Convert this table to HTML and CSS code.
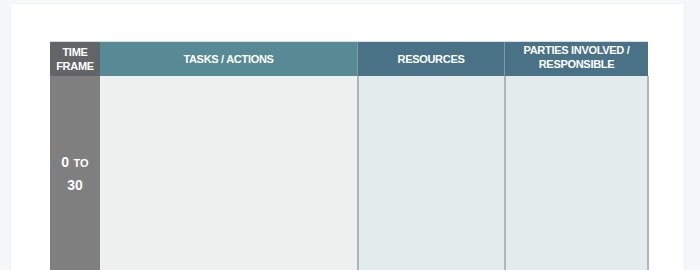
FILE: index.html
```html
<!DOCTYPE html>
<html>
<head>
<meta charset="utf-8">
<link rel="stylesheet" href="styles.css">
</head>
<body>
<div class="page">
  <table class="plan">
    <thead>
      <tr>
        <th class="h-time">TIME<br>FRAME</th>
        <th class="h-tasks">TASKS / ACTIONS</th>
        <th class="h-res">RESOURCES</th>
        <th class="h-parties">PARTIES INVOLVED /<br>RESPONSIBLE</th>
      </tr>
    </thead>
    <tbody>
      <tr>
        <td class="c-time"><span class="num">0</span> <span class="to">TO</span><br><span class="num">30</span></td>
        <td class="c-tasks"></td>
        <td class="c-res"></td>
        <td class="c-parties"></td>
      </tr>
    </tbody>
  </table>
</div>
</body>
</html>
```

FILE: styles.css
```css
html, body {
  margin: 0;
  padding: 0;
  background: #f6f7f9;
  height: 270px;
  overflow: hidden;
}
body {
  font-family: "Liberation Sans", Arial, sans-serif;
  padding: 4px 16px 0 11px;
  box-sizing: border-box;
}
.page {
  width: 673px;
  height: 266px;
  background: #ffffff;
  box-shadow: 0 0 2px rgba(0,0,0,0.06);
  padding: 37px 0 0 39px;
  box-sizing: border-box;
}
.plan {
  border-collapse: collapse;
  width: 599px;
  table-layout: fixed;
}
.plan th {
  height: 34px;
  padding: 0;
  color: #ffffff;
  font-size: 11px;
  letter-spacing: -0.3px;
  line-height: 14px;
  font-weight: bold;
  text-align: center;
  vertical-align: middle;
  border-top: 1px solid #d6dde0;
}
.h-time { width: 50px; background: #636466; }
.h-tasks { width: 257px; background: #578a94; }
.h-res { width: 146px; background: #4a7286; border-left: 1px solid #7d9aa8; }
.plan th.h-parties {
  background: #4a7286;
  border-left: 1px solid #7d9aa8;
  vertical-align: top;
  padding-top: 1px;
  height: 33px;
}
.plan td {
  height: 194px;
  padding: 0;
}
.c-time {
  background: #7f7f7f;
  color: #ffffff;
  font-weight: bold;
  text-align: center;
  vertical-align: middle;
  line-height: 21px;
}
.num { font-size: 14px; }
.to { font-size: 11px; }
.c-tasks { background: #eff0f0; }
.c-res { background: #e4ebed; border-left: 2px solid #b2b5b5; }
.c-parties { background: #e4ebed; border-left: 2px solid #b2b5b5; border-right: 2px solid #b2b5b5; }
```
